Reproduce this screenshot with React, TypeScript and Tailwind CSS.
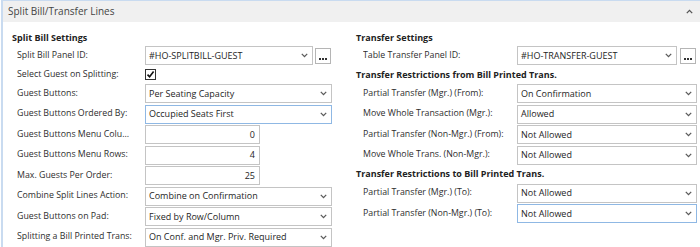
import React from "react";

const Chevron = () => (
  <svg width="7" height="5" viewBox="0 0 7 5" className="shrink-0">
    <path d="M0.8 0.9 L3.5 3.6 L6.2 0.9" fill="none" stroke="#5a5a5a" strokeWidth="1.3" />
  </svg>
);

const Dots = () => (
  <div className="w-[16px] h-[16px] border border-[#b5b5b5] bg-white flex items-end justify-center pb-[3px] shrink-0">
    <div className="flex gap-[1px]">
      <div className="w-[2px] h-[2px] bg-[#333]" />
      <div className="w-[2px] h-[2px] bg-[#333]" />
      <div className="w-[2px] h-[2px] bg-[#333]" />
    </div>
  </div>
);

type SelProps = { value: string; w: string; focus?: boolean };
const Select = ({ value, w, focus }: SelProps) => (
  <div
    className={
      "h-[19px] border bg-white flex items-center justify-between pl-[3px] pr-[4px] text-[#1e1e1e] text-[9px] " +
      w +
      (focus ? " border-[#8fb8e4]" : " border-[#c4c4c4]")
    }
  >
    <span className="whitespace-nowrap">{value}</span>
    <Chevron />
  </div>
);

const NumBox = ({ value }: { value: string }) => (
  <div className="h-[19px] w-[115px] border border-[#c4c4c4] bg-white flex items-center justify-end pr-[4px] text-[#1e1e1e] text-[9px]">
    {value}
  </div>
);

const Row = ({ label, lw, children }: { label: string; lw: string; children: React.ReactNode }) => (
  <div className="flex items-center">
    <div className={"text-[#2e2e2e] whitespace-nowrap overflow-hidden " + lw}>{label}</div>
    {children}
  </div>
);

const Heading = ({ children }: { children: React.ReactNode }) => (
  <div className="h-[16px] flex items-center font-bold text-[#222] text-[9px] whitespace-nowrap">{children}</div>
);

export default function App() {
  return (
    <div className="w-[700px] h-[247px] bg-white overflow-hidden font-['Open_Sans',sans-serif] text-[8.8px]">
      <div className="ml-[1px] h-full border-l-2 border-[#c9dbf0]">
        <div className="h-[22px] bg-[#f0f0f0] border-t border-[#c9dbf0] flex items-center justify-between pl-[5px] pr-[7px]">
          <span className="text-[10px] text-[#444]">Split Bill/Transfer Lines</span>
          <svg width="7" height="5" viewBox="0 0 7 5">
            <path d="M0.8 4.1 L3.5 1.4 L6.2 4.1" fill="none" stroke="#555" strokeWidth="1.3" />
          </svg>
        </div>
        <div className="flex pt-[8px]">
          <div className="w-[352px] pl-[9px] flex flex-col gap-[1.5px]">
            <Heading>Split Bill Settings</Heading>
            <div className="pl-[5px] flex flex-col gap-[1.5px] -mt-[1.5px]">
              <Row label="Split Bill Panel ID:" lw="w-[128px]">
                <div className="flex items-center gap-[2px]">
                  <Select value="#HO-SPLITBILL-GUEST" w="w-[168px]" />
                  <Dots />
                </div>
              </Row>
              <div className="flex items-center h-[16px]">
                <div className="w-[128px] text-[#2e2e2e] whitespace-nowrap">Select Guest on Splitting:</div>
                <div className="w-[11px] h-[11px] border border-[#333] bg-white flex items-center justify-center">
                  <svg width="9" height="9" viewBox="0 0 9 9">
                    <path d="M1.5 4.6 L3.6 6.8 L7.6 1.6" fill="none" stroke="#111" strokeWidth="1.6" />
                  </svg>
                </div>
              </div>
              <Row label="Guest Buttons:" lw="w-[128px]">
                <Select value="Per Seating Capacity" w="w-[187px]" />
              </Row>
              <Row label="Guest Buttons Ordered By:" lw="w-[128px]">
                <Select value="Occupied Seats First" w="w-[187px]" focus />
              </Row>
              <Row label="Guest Buttons Menu Colu..." lw="w-[128px]">
                <NumBox value="0" />
              </Row>
              <Row label="Guest Buttons Menu Rows:" lw="w-[128px]">
                <NumBox value="4" />
              </Row>
              <Row label="Max. Guests Per Order:" lw="w-[128px]">
                <NumBox value="25" />
              </Row>
              <Row label="Combine Split Lines Action:" lw="w-[128px]">
                <Select value="Combine on Confirmation" w="w-[187px]" />
              </Row>
              <Row label="Guest Buttons on Pad:" lw="w-[128px]">
                <Select value="Fixed by Row/Column" w="w-[187px]" />
              </Row>
              <Row label="Splitting a Bill Printed Trans:" lw="w-[128px]">
                <Select value="On Conf. and Mgr. Priv. Required" w="w-[187px]" />
              </Row>
            </div>
          </div>
          <div className="flex-1 flex flex-col gap-[1.5px] pl-[1px]">
            <Heading>Transfer Settings</Heading>
            <div className="pl-[7px] -mt-[1.5px]">
              <Row label="Table Transfer Panel ID:" lw="w-[154px]">
                <div className="flex items-center gap-[3px]">
                  <Select value="#HO-TRANSFER-GUEST" w="w-[160px]" />
                  <Dots />
                </div>
              </Row>
            </div>
            <Heading>Transfer Restrictions from Bill Printed Trans.</Heading>
            <div className="pl-[7px] flex flex-col gap-[1.5px]">
              <Row label="Partial Transfer (Mgr.) (From):" lw="w-[154px]">
                <Select value="On Confirmation" w="w-[180px]" />
              </Row>
              <Row label="Move Whole Transaction (Mgr.):" lw="w-[154px]">
                <Select value="Allowed" w="w-[180px]" />
              </Row>
              <Row label="Partial Transfer (Non-Mgr.) (From):" lw="w-[154px]">
                <Select value="Not Allowed" w="w-[180px]" />
              </Row>
              <Row label="Move Whole Trans. (Non-Mgr.):" lw="w-[154px]">
                <Select value="Not Allowed" w="w-[180px]" />
              </Row>
            </div>
            <Heading>Transfer Restrictions to Bill Printed Trans.</Heading>
            <div className="pl-[7px] flex flex-col gap-[1.5px]">
              <Row label="Partial Transfer (Mgr.) (To):" lw="w-[154px]">
                <Select value="Not Allowed" w="w-[180px]" />
              </Row>
              <Row label="Partial Transfer (Non-Mgr.) (To):" lw="w-[154px]">
                <Select value="Not Allowed" w="w-[180px]" focus />
              </Row>
            </div>
          </div>
        </div>
      </div>
    </div>
  );
}
